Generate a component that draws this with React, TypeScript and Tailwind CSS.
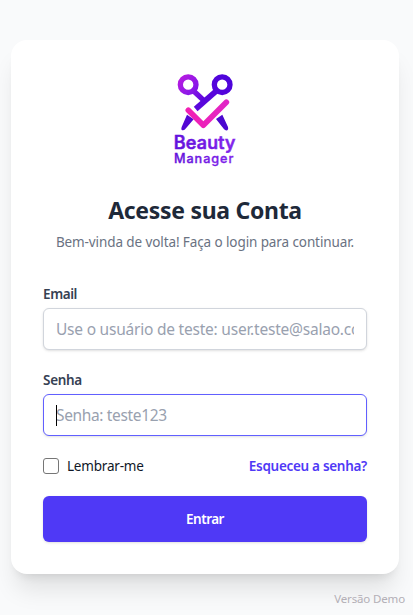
import React from 'react';

function Logo() {
  return (
    <svg className="mx-auto block h-24 w-20" viewBox="0 21 240 288" fill="none" role="img" aria-label="Beauty Manager">
      <defs>
        <linearGradient id="ringLeft" gradientUnits="userSpaceOnUse" x1="40" y1="40" x2="115" y2="105">
          <stop offset="0" stopColor="#b81be0" />
          <stop offset="0.55" stopColor="#8a18e8" />
          <stop offset="1" stopColor="#5c05dc" />
        </linearGradient>
        <linearGradient id="ringRight" gradientUnits="userSpaceOnUse" x1="90" y1="133" x2="200" y2="40">
          <stop offset="0" stopColor="#5a08dc" />
          <stop offset="0.5" stopColor="#5804dc" />
          <stop offset="1" stopColor="#4c04da" />
        </linearGradient>
        <linearGradient id="check" gradientUnits="userSpaceOnUse" x1="65" y1="130" x2="190" y2="110">
          <stop offset="0" stopColor="#f21fb4" />
          <stop offset="1" stopColor="#e026c6" />
        </linearGradient>
        <linearGradient id="word" gradientUnits="userSpaceOnUse" x1="28" y1="0" x2="210" y2="0">
          <stop offset="0" stopColor="#6210dc" />
          <stop offset="1" stopColor="#8220ec" />
        </linearGradient>
      </defs>
      <circle cx="69.5" cy="59" r="23.5" stroke="url(#ringLeft)" strokeWidth="16" />
      <path d="M86 78 116 106" stroke="url(#ringLeft)" strokeWidth="16" />
      <circle cx="171.5" cy="59" r="23.5" stroke="url(#ringRight)" strokeWidth="16" />
      <path d="M155 77 92 132" stroke="url(#ringRight)" strokeWidth="17" />
      <path d="M66 149 86 163 61 192Q56 198 50 195 48 192 50 186Z" fill="#5406d4" />
      <path d="M153 162 172 149 189 186Q191 193 187 196 181 198 176 191Z" fill="#4a08d0" />
      <path d="M70 136 115 181 184 112" stroke="url(#check)" strokeWidth="17" strokeLinecap="round" strokeLinejoin="round" />
      <text x="26" y="253" textLength="185" fill="url(#word)" stroke="url(#word)" strokeWidth="2" className="font-['Inter',sans-serif] text-[54px] font-medium">Beauty</text>
      <text x="27" y="293" textLength="178" fill="url(#word)" stroke="url(#word)" strokeWidth="1" className="font-['Inter',sans-serif] text-[38px] font-medium">Manager</text>
    </svg>
  );
}

const field =
  "block h-[42px] w-full rounded-md border bg-white px-3 text-[15.5px] text-gray-900 shadow-sm outline-none placeholder:text-[#99a1af]";

export default function App() {
  return (
    <main className="flex h-[615px] w-[413px] flex-col overflow-hidden bg-[#f9fafb] pt-10 pl-[11px] font-['Noto_Sans','Open_Sans',sans-serif]">
      <section className="h-[534px] w-[388px] shrink-0 rounded-2xl bg-white p-8 shadow-xl">
        <Logo />
        <h1 className="mt-[26px] text-center text-[23px] leading-8 font-bold tracking-[-0.3px] whitespace-nowrap text-[#1e2939]">Acesse sua Conta</h1>
        <p className="mt-1.5 text-center text-[13.5px] leading-5 tracking-[-0.1px] whitespace-nowrap text-[#6a7282]">Bem-vinda de volta! Faça o login para continuar.</p>
        <form className="mt-8" onSubmit={(e) => e.preventDefault()}>
          <label htmlFor="email" className="block text-[13.5px] leading-5 font-semibold tracking-[-0.4px] text-[#364153]">Email</label>
          <input id="email" className={field + " mt-1 border-[#d1d5dc] tracking-[-0.22px]"} placeholder="Use o usuário de teste: user.teste@salao.com" />
          <label htmlFor="password" className="mt-5 block text-[13.5px] leading-5 font-semibold tracking-[-0.3px] text-[#364153]">Senha</label>
          <div className="relative mt-1">
            <input id="password" type="password" className={field + " border-[#615fff] tracking-[-0.35px]"} placeholder="Senha: teste123" />
            <span className="absolute top-[11px] left-[13px] h-[21px] w-px bg-black" />
          </div>
          <div className="mt-5 flex h-5 items-center justify-between text-[13.5px] leading-5 whitespace-nowrap">
            <label className="flex items-center gap-2 tracking-[-0.2px] text-[#101828]">
              <input type="checkbox" className="size-4 appearance-none rounded-[3px] border border-[#767676] bg-white" />
              Lembrar-me
            </label>
            <a href="#" className="font-semibold tracking-[-0.3px] text-[#4f39f6]">Esqueceu a senha?</a>
          </div>
          <button className="mt-5 h-[46px] w-full rounded-md bg-[#4f39f6] text-[13.5px] leading-5 font-semibold tracking-[-0.5px] text-white shadow-sm">Entrar</button>
        </form>
      </section>
      <footer className="mt-[17px] pr-2 text-right text-[11.5px] leading-4 tracking-[-0.15px] text-[#b3afb6]">Versão Demo</footer>
    </main>
  );
}
